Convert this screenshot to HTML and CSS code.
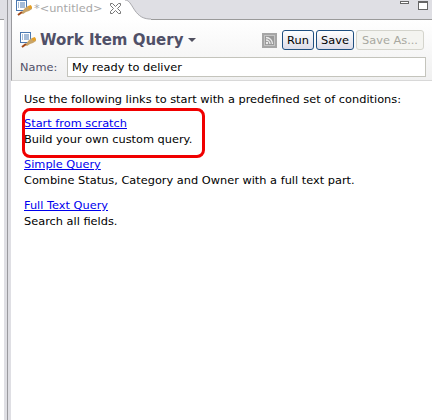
FILE: index.html
```html
<!DOCTYPE html>
<html lang="en">
<head>
    <meta charset="UTF-8">
    <title>Work Item Query</title>
    <link rel="stylesheet" href="styles.css">
</head>
<body>
    <div class="side">
        <div class="side-top"></div>
    </div>
    <div class="sash"></div>
    <div class="editor">
        <div class="tabstrip">
            <div class="tab">
                <svg class="icon" width="17" height="16" viewBox="0 0 17 16">
                    <rect x="0.5" y="0.5" width="10" height="10" fill="#fff" stroke="#4a78b0"/>
                    <path d="M2 3h1M4 3h5M2 5h1M4 5h5M2 7h1M4 7h5" stroke="#4a78b0"/>
                    <path d="M5 13l4-5 3-2 3 1 1-1v3l-3 2-3 1-3 2z" fill="#c8a468"/>
                    <path d="M12 6l3-1 1 3-3 1z" fill="#e8a020"/>
                    <path d="M2 15l4-3" stroke="#a04818" stroke-width="2"/>
                </svg>
                <span class="tab-title">*&lt;untitled&gt;</span>
                <svg class="tab-close" width="11" height="11" viewBox="0 0 11 11">
                    <path d="M.5.500h2l3 3 3-3h2v2l-3 3 3 3v2h-2l-3-3-3 3h-2v-2l3-3-3-3z" fill="#fff" stroke="#777"/>
                </svg>
            </div>
            <svg class="tab-end" width="26" height="20" viewBox="0 0 26 20">
                <path d="M0 0C8 0 8 18 24 19H26V20H0z" fill="#fff"/>
                <path d="M0 0C8 0 8 18 24 19H26" fill="none" stroke="#a8a8ac"/>
            </svg>
            <div class="view-btns">
                <span class="min-btn"></span>
                <span class="max-btn"></span>
            </div>
        </div>
        <div class="form-head">
            <div class="title-row">
                <svg class="icon" width="17" height="16" viewBox="0 0 17 16">
                    <rect x="0.5" y="0.5" width="10" height="10" fill="#fff" stroke="#4a78b0"/>
                    <path d="M2 3h1M4 3h5M2 5h1M4 5h5M2 7h1M4 7h5" stroke="#4a78b0"/>
                    <path d="M5 13l4-5 3-2 3 1 1-1v3l-3 2-3 1-3 2z" fill="#c8a468"/>
                    <path d="M12 6l3-1 1 3-3 1z" fill="#e8a020"/>
                    <path d="M2 15l4-3" stroke="#a04818" stroke-width="2"/>
                </svg>
                <h1>Work Item Query</h1>
                <span class="caret"></span>
                <svg class="feed" width="15" height="15" viewBox="0 0 15 15">
                    <rect width="15" height="15" fill="#a6a6a6"/>
                    <rect x="2.500" y="2.500" width="10" height="10" fill="#999" stroke="#c4c4c4"/>
                    <circle cx="5" cy="10" r="1.2" fill="#eee"/>
                    <path d="M4 7a4 4 0 0 1 4 4M4 4.500a6.500 6.500 0 0 1 6.500 6.500" fill="none" stroke="#eee" stroke-width="1.300"/>
                </svg>
                <button class="btn run">Run</button>
                <button class="btn save">Save</button>
                <button class="btn save-as" disabled>Save As...</button>
            </div>
            <div class="name-row">
                <label>Name:</label>
                <input type="text" value="My ready to deliver">
            </div>
        </div>
        <div class="body">
            <p class="intro">Use the following links to start with a predefined set of conditions:</p>
            <div class="choice first">
                <a href="#">Start from scratch</a>
                <p>Build your own custom query.</p>
                <div class="callout"></div>
            </div>
            <div class="choice">
                <a href="#">Simple Query</a>
                <p>Combine Status, Category and Owner with a full text part.</p>
            </div>
            <div class="choice">
                <a href="#">Full Text Query</a>
                <p>Search all fields.</p>
            </div>
        </div>
    </div>
</body>
</html>
```

FILE: styles.css
```css
body {
    margin: 0;
    display: flex;
    height: 420px;
    overflow: hidden;
    background: #fff;
    font-family: 'DejaVu Sans', sans-serif;
    font-size: 11.35px;
    line-height: 16px;
    color: #000;
}

.side {
    width: 4px;
    flex-shrink: 0;
}

.side-top {
    height: 19px;
    background: #dfdfe4;
    border-bottom: 1px solid #9a9a9a;
}

.sash {
    width: 3px;
    flex-shrink: 0;
    background: #dfdfe4;
    border-right: 1px solid #9a9a9e;
}

.editor {
    flex: 1;
    display: flex;
    flex-direction: column;
    min-width: 0;
    border-left: 3px solid #dfdfe4;
}

.tabstrip {
    display: flex;
    height: 19px;
    background: #dfdfe4;
    border-bottom: 1px solid #9a9a9a;
    border-left: 1px solid #9a9a9e;
}

.tab {
    display: flex;
    align-items: flex-start;
    background: #fff;
    padding: 0 0 0 4px;
    width: 113px;
    height: 20px;
    box-sizing: border-box;
}

.tab-title {
    margin-left: 1px;
    color: #a8a8a8;
}

.tab-close {
    margin: 3px 0 0 8px;
}

.view-btns {
    margin-left: auto;
    display: flex;
    gap: 9px;
    padding: 1px 4px 0 0;
    align-items: flex-start;
}

.min-btn {
    width: 7px;
    height: 1px;
    border: 1px solid #666;
    background: #fff;
}

.max-btn {
    width: 8px;
    height: 6px;
    border: 1px solid #666;
    border-top-width: 2px;
    background: #fff;
}

.form-head {
    background: linear-gradient(to bottom, #fff, #f0f0f0);
    border-bottom: 1px solid #d8d8d8;
    border-left: 1px solid #9a9a9e;
    height: 61px;
    padding: 10px 8px 0 8px;
    box-sizing: border-box;
}

.title-row {
    display: flex;
    align-items: center;
    height: 20px;
}

h1 {
    margin: 0 0 0 3px;
    font-size: 15px;
    font-weight: bold;
    color: #505068;
}

.caret {
    margin: 0 0 0 5px;
    border: 4px solid transparent;
    border-top: 4px solid #505060;
    border-bottom: 0;
}

.feed {
    margin-left: auto;
    margin-right: 3px;
}

.btn {
    font: inherit;
    height: 20px;
    padding: 0;
    margin-left: 2px;
    border: 1px solid #1f4f80;
    border-radius: 3px;
    background: linear-gradient(to bottom, #fff, #dcdce8);
    color: #000;
}

.run {
    width: 32px;
}

.save {
    width: 38px;
}

.save-as {
    width: 68px;
    border-color: #d4d4cc;
    background: #f4f4f0;
    color: #a8a8a0;
}

.name-row {
    display: flex;
    align-items: center;
    margin: 7px -2px 0 0;
}

label {
    width: 47px;
    flex-shrink: 0;
    color: #505068;
}

input {
    flex: 1;
    min-width: 0;
    height: 20px;
    box-sizing: border-box;
    border: 1px solid #c4c4bc;
    padding: 0 4px;
    font: inherit;
    color: #000;
}

.body {
    padding: 10px 0 0 13px;
}

.body p {
    margin: 0;
}

.body .intro {
    margin-bottom: 8px;
}

.choice {
    margin-bottom: 9px;
}

.choice a {
    color: #0000ee;
}

.first {
    position: relative;
}

.callout {
    position: absolute;
    left: -2px;
    top: -7px;
    width: 177px;
    height: 44px;
    border: 3px solid #f00000;
    border-radius: 8px;
}
```
